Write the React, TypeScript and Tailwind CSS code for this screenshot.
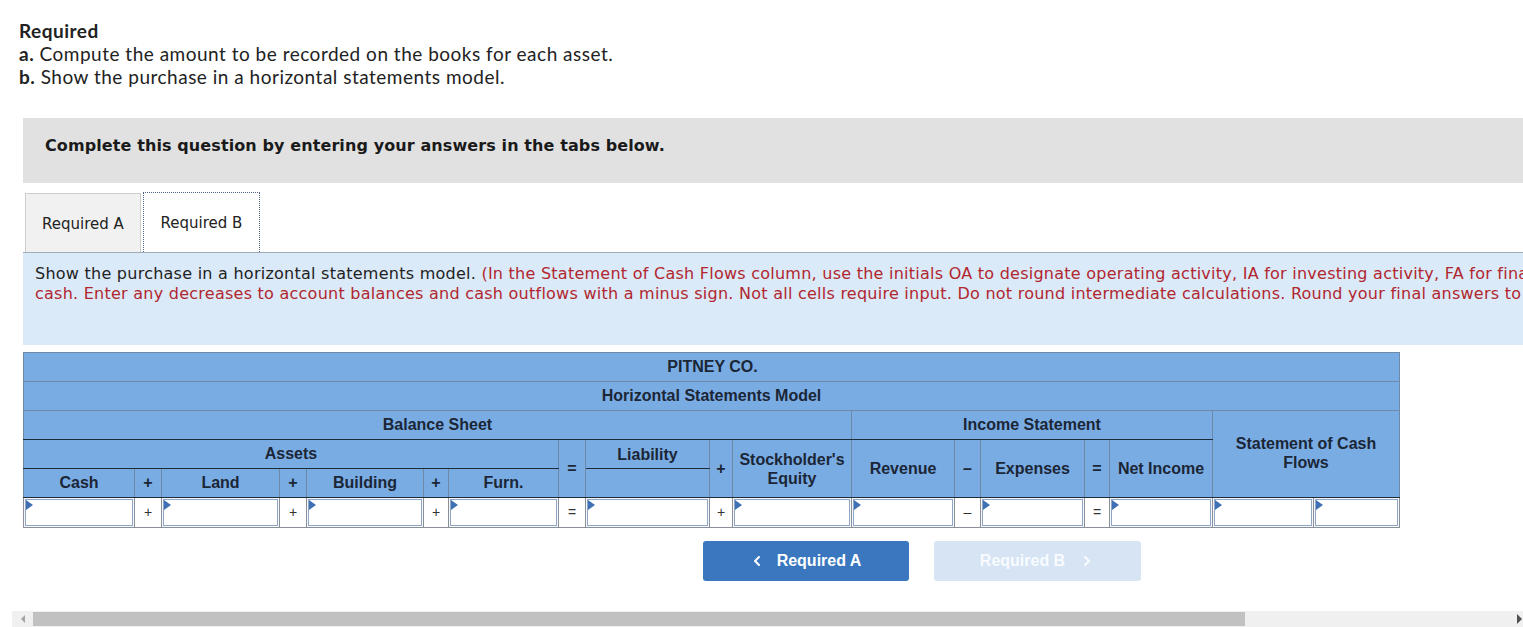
import { ChevronLeft, ChevronRight } from "lucide-react"

const colWidths = [111, 27, 118, 27, 117, 25, 110, 27, 124, 23, 119, 103, 26, 104, 25, 103, 101, 86]

// which columns of the entry row are operators
const entryRow: (string | null)[] = [
  null, "+", null, "+", null, "+", null, "=", null, "+", null, null, "–", null, "=", null, null, null,
]

function EntryInput() {
  return (
    <div className="relative h-[27px] border border-[#8fa6c4] bg-white">
      <span className="absolute left-0 top-0 h-0 w-0 border-y-[5px] border-l-[7px] border-y-transparent border-l-[#3f70b3]" />
    </div>
  )
}

function HorizontalModel() {
  const th = "border border-[#6f8aa8] text-center align-middle font-bold"
  return (
    <table
      className="table-fixed border-collapse bg-[#7aace4] text-[16px] text-[#1b2636]"
      style={{ width: 1376, fontFamily: '"Liberation Sans", Arial, sans-serif' }}
    >
      <colgroup>
        {colWidths.map((w, i) => (
          <col key={i} style={{ width: w }} />
        ))}
      </colgroup>
      <thead>
        <tr className="h-[29px]">
          <th colSpan={18} className={`${th} pl-[2px]`}>
            PITNEY CO.
          </th>
        </tr>
        <tr className="h-[29px]">
          <th colSpan={18} className={th}>
            Horizontal Statements Model
          </th>
        </tr>
        <tr className="h-[29px]">
          <th colSpan={11} className={`${th} border-b-[#1d2b3b]`}>
            Balance Sheet
          </th>
          <th colSpan={5} className={`${th} border-b-[#1d2b3b]`}>
            Income Statement
          </th>
          <th colSpan={2} rowSpan={3} className={`${th} border-b-[#1d2b3b] leading-[19px]`}>
            <div className="-mt-[2px]">
              Statement of Cash
              <br />
              Flows
            </div>
          </th>
        </tr>
        <tr className="h-[29px]">
          <th colSpan={7} className={`${th} border-b-[#1d2b3b]`}>
            Assets
          </th>
          <th rowSpan={2} className={`${th} border-b-[#1d2b3b]`}>
            =
          </th>
          <th className={`${th} border-b-[#1d2b3b] align-top pt-[3px]`}>Liability</th>
          <th rowSpan={2} className={`${th} border-b-[#1d2b3b]`}>
            +
          </th>
          <th rowSpan={2} className={`${th} border-b-[#1d2b3b] leading-[19px]`}>
            Stockholder's
            <br />
            Equity
          </th>
          <th rowSpan={2} className={`${th} border-b-[#1d2b3b]`}>
            Revenue
          </th>
          <th rowSpan={2} className={`${th} border-b-[#1d2b3b]`}>
            –
          </th>
          <th rowSpan={2} className={`${th} border-b-[#1d2b3b]`}>
            Expenses
          </th>
          <th rowSpan={2} className={`${th} border-b-[#1d2b3b]`}>
            =
          </th>
          <th rowSpan={2} className={`${th} border-b-[#1d2b3b]`}>
            Net Income
          </th>
        </tr>
        <tr className="h-[29px]">
          {["Cash", "+", "Land", "+", "Building", "+", "Furn."].map((t, i) => (
            <th key={i} className={`${th} border-b-[#1d2b3b]`}>
              {t}
            </th>
          ))}
          <th className={`${th} border-b-[#1d2b3b]`} />
        </tr>
      </thead>
      <tbody>
        <tr className="h-[30px]">
          {entryRow.map((op, i) =>
            op ? (
              <td
                key={i}
                className="border border-[#8a8f98] bg-white text-center align-middle text-[14px] font-normal text-[#333]"
              >
                {op}
              </td>
            ) : (
              <td key={i} className="border border-[#8a8f98] bg-[#f4f7fb] p-[1px]">
                <EntryInput />
              </td>
            )
          )}
        </tr>
      </tbody>
    </table>
  )
}

export default function App() {
  return (
    <div className="flex h-[627px] w-[1523px] flex-col overflow-hidden bg-white">
      <div className="h-[611px] shrink-0">
        {/* Instructions */}
        <div
          className="pl-[19px] pt-[19px] text-[19px] leading-[23px] tracking-[0.5px] text-[#222]"
          style={{ fontFamily: 'Lato, "Open Sans", sans-serif' }}
        >
          <div className="font-bold">Required</div>
          <div>
            <span className="font-bold">a.</span> Compute the amount to be recorded on the books for each asset.
          </div>
          <div>
            <span className="font-bold">b.</span> Show the purchase in a horizontal statements model.
          </div>
        </div>

        <div
          className="ml-[23px] mt-[30px] w-[1700px]"
          style={{ fontFamily: '"DejaVu Sans", Verdana, sans-serif' }}
        >
          <div className="h-[65px] bg-[#e1e1e1] pl-[22px] pt-[16px] text-[16px] font-bold tracking-[0.1px] text-[#1a1a1a]">
            Complete this question by entering your answers in the tabs below.
          </div>

          {/* Tabs */}
          <div className="mt-[9px] flex items-end border-b border-[#a3abb8] pl-[2px]">
            <div className="flex h-[59px] w-[116px] items-center justify-center border border-b-0 border-[#cdcdcd] bg-[#f1f1f1] pt-[2px] text-[15px] text-[#222]">
              Required A
            </div>
            <div className="ml-[2px] flex h-[60px] w-[117px] items-center justify-center border border-b-0 border-dotted border-[#4e6386] bg-white pt-[2px] text-[15px] text-[#222]">
              Required B
            </div>
          </div>

          <div className="h-[92px] whitespace-nowrap bg-[#dbeaf8] pl-[12px] pt-[11px] text-[16px] leading-[20px] tracking-[0.25px] text-[#222]">
            Show the purchase in a horizontal statements model.{" "}
            <span className="text-[#b1262f]">
              (In the Statement of Cash Flows column, use the initials OA to designate operating activity, IA for
              investing activity, FA for financing activity, and NC for net change in
              <br />
              cash. Enter any decreases to account balances and cash outflows with a minus sign. Not all cells require
              input. Do not round intermediate calculations. Round your final answers to the nearest whole dollar
              amount.)
            </span>
          </div>

          <div className="mt-[7px]">
            <HorizontalModel />
          </div>

          {/* Navigation */}
          <div
            className="ml-[680px] mt-[13px] flex gap-[25px] text-[16px] font-bold text-white"
            style={{ fontFamily: '"Liberation Sans", Arial, sans-serif' }}
          >
            <button className="flex h-[40px] w-[206px] items-center justify-center gap-[12px] rounded-[3px] bg-[#3a77bf] pr-[2px]">
              <ChevronLeft size={16} strokeWidth={3} />
              Required A
            </button>
            <button className="flex h-[40px] w-[207px] items-center justify-center gap-[14px] rounded-[3px] bg-[#d6e4f3] text-[#f8fbff]">
              Required B
              <ChevronRight size={16} strokeWidth={3} />
            </button>
          </div>
        </div>
      </div>

      {/* Horizontal scrollbar */}
      <div className="ml-[12px] flex h-[16px] bg-[#f0f0f0]">
        <div className="flex w-[21px] items-center justify-center">
          <span className="h-0 w-0 border-y-[4px] border-r-[4px] border-y-transparent border-r-[#a3a3a3]" />
        </div>
        <div className="my-[1px] w-[1212px] bg-[#c1c1c1]" />
        <div className="flex-1" />
        <div className="flex w-[12px] items-center justify-end pr-[1px]">
          <span className="h-0 w-0 border-y-[5px] border-l-[5px] border-y-transparent border-l-[#505050]" />
        </div>
      </div>
    </div>
  )
}
